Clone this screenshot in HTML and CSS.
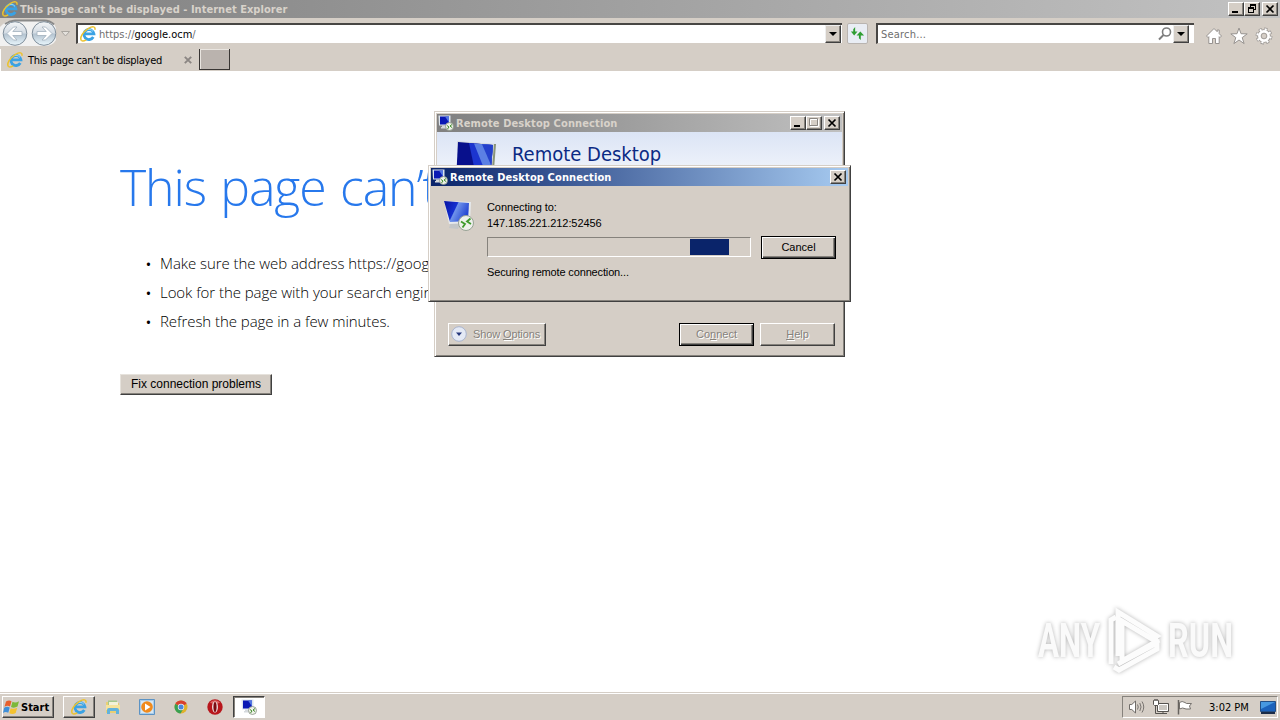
FILE: index.html
```html
<!DOCTYPE html>
<html lang="en">
<head>
<meta charset="utf-8">
<title>This page can't be displayed</title>
<link rel="stylesheet" href="styles.css">
</head>
<body>
<svg class="defs" width="0" height="0">
    <defs>
        <linearGradient id="gScreen" x1="0" y1="0" x2="1" y2="0.4">
            <stop offset="0" stop-color="#0612a0"/>
            <stop offset="0.5" stop-color="#1530d0"/>
            <stop offset="0.54" stop-color="#6f93ea"/>
            <stop offset="1" stop-color="#2648d4"/>
        </linearGradient>
        <linearGradient id="gBall" x1="0" y1="0" x2="0" y2="1">
            <stop offset="0" stop-color="#f4f6f8"/>
            <stop offset="0.48" stop-color="#d3dbe3"/>
            <stop offset="0.52" stop-color="#b4c3d0"/>
            <stop offset="1" stop-color="#e9f6fc"/>
        </linearGradient>
        <symbol id="ie" viewBox="0 0 16 16">
            <path d="M13.300 11a5 5 0 1 1 .6-3.200H5" fill="none" stroke="#3aa2e4" stroke-width="2.800"/>
            <path d="M13 5.400A5 5 0 0 0 5 5.200" fill="none" stroke="#9bdafa" stroke-width="1"/>
            <path d="M1.600 14.800C-1 12 3.200 5.500 8.500 2.300 12.500.1 15.800.2 14.800 3.800" fill="none" stroke="#ecc22e" stroke-width="1.500"/>
            <path d="M1.600 14.600c1 .9 2.800.3 4.600-.8" fill="none" stroke="#ecc22e" stroke-width="1.400"/>
        </symbol>
        <symbol id="rdc" viewBox="0 0 32 32">
            <path d="M8 23l9 2-2 5-9-1z" fill="#c3c6c8"/>
            <path d="M1 2l27 1-1 21-21 1z" fill="#e6e9ec"/>
            <path d="M1 2l25 2-1 18-18 1z" fill="url(#gScreen)"/>
            <circle cx="23" cy="24" r="7.500" fill="#eef1ec" stroke="#98a295"/>
            <path d="M18 22.500l4 2.500-2.500 3.500M27.500 19.500l-3.500 3 4 2.500" fill="none" stroke="#3f9a2c" stroke-width="1.800"/>
        </symbol>
        <symbol id="rdcSmall" viewBox="0 0 16 16">
            <path d="M.5.500h12v10H1z" fill="#dce4ee"/>
            <path d="M2 1.500h9v8H2z" fill="#0a18b4"/>
            <path d="M7 1.500h4v6z" fill="#5276e2"/>
            <path d="M4 10.500h4V12h2v1.500H3V12h1z" fill="#d5d9dd"/>
            <circle cx="11.500" cy="11.500" r="4" fill="#eef2e8" stroke="#858f81" stroke-width=".8"/>
            <path d="M9 10.500l2 1.500-1.500 2M14 9.500L12 11l2 1.500" fill="none" stroke="#3f8a2c"/>
        </symbol>
    </defs>
</svg>

<div class="browser">
    <div class="titlebar">
        <svg class="ico16"><use href="#ie"/></svg>
        <span class="caption">This page can't be displayed - Internet Explorer</span>
        <div class="winbtns">
            <span class="wbtn"><svg viewBox="0 0 14 12"><path d="M3 8h6v2H3z"/></svg></span>
            <span class="wbtn"><svg viewBox="0 0 14 12"><path d="M5 1h6v6H9V6h1V3H6v1H5zM3 4h6v6H3zM4 6v3h4V6z" fill-rule="evenodd"/></svg></span>
            <span class="wbtn last"><svg viewBox="0 0 14 12"><path d="M3.500 2.500l7 7M10.500 2.500l-7 7" stroke="#000" stroke-width="1.700"/></svg></span>
        </div>
    </div>

    <div class="toolbar">
        <svg class="nav" width="72" height="29" viewBox="0 0 72 29">
            <path d="M0 8Q6 1 15 1h28q10 0 13 8v12q-3 6-12 6H0z" fill="#f1f1f1"/>
            <path d="M5 5Q10 1.500 15 1.500h29q6 0 10 4" fill="none" stroke="#898989" stroke-width="2"/>
            <circle cx="15" cy="14.500" r="11.800" fill="url(#gBall)" stroke="#7f8e9b"/>
            <circle cx="44" cy="14.500" r="11.800" fill="url(#gBall)" stroke="#7f8e9b"/>
            <path d="M7 14.500L13.500 8H17l-4.200 4.500H22v4h-9.200L17 21h-3.500z" fill="#fff" stroke="#a2b0bc" stroke-width=".8"/>
            <path d="M52 14.500L45.500 8H42l4.200 4.500H37v4h9.200L42 21h3.500z" fill="#fff" stroke="#a2b0bc" stroke-width=".8"/>
            <path d="M61.500 12.500h8l-4 4.500z" fill="#e4e1dc" stroke="#aaa6a0"/>
        </svg>
        <div class="field address">
            <svg class="ico16"><use href="#ie"/></svg>
            <span class="url">https://<b>google.ocm</b>/</span>
            <span class="drop"><svg viewBox="0 0 14 16"><path d="M3 6h8L7 10z"/></svg></span>
        </div>
        <span class="refresh">
            <svg viewBox="0 0 18 18"><path d="M6.500 2v5H9L5.500 11 2 7h2.500V4.500zM12.500 16v-5H16L12 7 8 11h2.500v3z" fill="#2f9e32"/></svg>
        </span>
        <div class="field search">
            <span class="hint">Search...</span>
            <svg class="lens" viewBox="0 0 14 14"><circle cx="8.500" cy="5" r="4" fill="none" stroke="#7d7d7d" stroke-width="1.600"/><path d="M5.500 8L1 12.500" stroke="#7d7d7d" stroke-width="2"/></svg>
            <span class="drop"><svg viewBox="0 0 14 16"><path d="M3 6h8L7 10z"/></svg></span>
        </div>
        <div class="cmds">
            <svg viewBox="0 0 18 18"><path d="M9 1.500L1.500 9 3 10.500l.8-.8V16.500h3.700v-5h3v5h3.700V9.700l.8.8L16.500 9l-2.300-2.300V3h-2v1.700z" fill="#fff" stroke="#979390"/></svg>
            <svg viewBox="0 0 18 18"><path d="M9 1l2 5.700 6.200.2-5 3.700 1.900 6L9 13l-5.100 3.600 1.900-6-5-3.700L7 6.700z" fill="#fff" stroke="#979390"/></svg>
            <svg viewBox="0 0 18 18"><circle cx="9" cy="9" r="6.600" fill="none" stroke="#979390" stroke-width="3.600" stroke-dasharray="3 2.180"/><circle cx="9" cy="9" r="4.600" fill="none" stroke="#979390" stroke-width="4.500"/><circle cx="9" cy="9" r="6.600" fill="none" stroke="#fff" stroke-width="2.200" stroke-dasharray="2 3.180" stroke-dashoffset="-.5"/><circle cx="9" cy="9" r="4.600" fill="#d5cec6" stroke="#fff" stroke-width="2.700"/><circle cx="9" cy="9" r="2.800" fill="#d5cec6" stroke="#979390" stroke-width=".8"/></svg>
        </div>
    </div>

    <div class="tabs">
        <div class="tab">
            <svg class="ico16"><use href="#ie"/></svg>
            <span class="tabname">This page can't be displayed</span>
            <svg class="tabclose" viewBox="0 0 8 8"><path d="M.8.8l6.400 6.400M7.200.8L.8 7.200" stroke="#8b8683" stroke-width="1.900"/></svg>
        </div>
        <div class="newtab"></div>
    </div>

    <div class="page">
        <h1>This page can’t be displayed</h1>
        <ul>
            <li>Make sure the web address https://google.ocm is correct.</li>
            <li>Look for the page with your search engine.</li>
            <li>Refresh the page in a few minutes.</li>
        </ul>
        <button class="fix">Fix connection problems</button>
    </div>

    <div class="taskbar">
        <div class="start">
            <svg viewBox="0 0 18 16"><path d="M3 2.500q3-2 5.500-.3L7 7.500Q4.500 6 1.500 7.700z" fill="#e8602c"/><path d="M9.500 2.800q3 1.500 6.500-.6L14.500 7.600Q11 9.500 8 8z" fill="#7cb83a"/><path d="M1.200 8.800Q4 7 6.700 8.600L5.300 13.800Q2.500 12.300 0 14z" fill="#3f8fd8"/><path d="M7.700 9.200q3 1.500 6.500-.5L12.700 14q-3 2-6.400.3z" fill="#f4c22f"/></svg>
            <b>Start</b>
        </div>
        <div class="task up"><svg viewBox="0 0 16 16"><use href="#ie"/></svg></div>
        <div class="task"><svg viewBox="0 0 16 16"><path d="M1 3h5l1 1h7v10H1z" fill="#e9cf74"/><path d="M3 1.500h9V7H3z" fill="#a6c88c"/><path d="M4 3h9v5H4z" fill="#f4f2d8"/><path d="M1 6h14v5H1z" fill="#f6e39c"/><path d="M2 15v-4q0-2 2-2h8q2 0 2 2v4h-3v-3H5v3z" fill="#62b2dc"/></svg></div>
        <div class="task"><svg viewBox="0 0 16 16"><path d="M.5.500h15v15H.5z" fill="#a9cdea" stroke="#5c93c4"/><path d="M2 2h12v12H2z" fill="#d6e7f4"/><circle cx="8" cy="8" r="5.800" fill="#f08a1c"/><path d="M6 4.500v7L11.500 8z" fill="#fff"/></svg></div>
        <div class="task"><svg viewBox="0 0 16 16"><circle cx="8" cy="8" r="6.500" fill="#e0b22c"/><path d="M8 8L2.400 4.700A6.500 6.500 0 0 0 7.500 14.500l3-5z" fill="#38a052"/><path d="M2.400 4.700a6.500 6.500 0 0 1 11.200 0L8 8z" fill="#d8402f"/><circle cx="8" cy="8" r="3.200" fill="#f2f2f2"/><circle cx="8" cy="8" r="2.500" fill="#4a86dc"/></svg></div>
        <div class="task"><svg viewBox="0 0 16 16"><circle cx="8" cy="8" r="7.700" fill="#b8161c"/><path d="M3 3.500Q8-1 13 3.500L8 6z" fill="#dc6464"/><ellipse cx="8" cy="8" rx="2.900" ry="5.600" fill="#f3eeee"/><ellipse cx="8" cy="8" rx="1.600" ry="5" fill="#7c0b12"/></svg></div>
        <div class="task down"><svg viewBox="0 0 16 16"><use href="#rdcSmall"/></svg></div>
        <div class="tray">
            <svg viewBox="0 0 18 16"><path d="M1.500 5.500h2.300L7.500 2v12l-3.700-3.500H1.500z" fill="#fff" stroke="#706c68"/><path d="M9.500 5.500q1.500 2.500 0 5M11.800 4q2.500 4 0 8M14 2.500q3.500 5.500 0 11" fill="none" stroke="#77736f"/></svg>
            <svg viewBox="0 0 18 16"><path d="M5.500 4.500h11v8h-11z" fill="#cbc7c1" stroke="#56534f"/><path d="M6.500 5.500h9v6h-9z" fill="none" stroke="#fff"/><path d="M8 14.500h7M11 13v1.500M3.500 7v7.500H8" stroke="#56534f" fill="none"/><path d="M1.500 5.500v-4h1v-1h1v1h1v-1h1v1h1v4l-1 1h-3z" fill="#fff" stroke="#56534f"/></svg>
            <svg viewBox="0 0 18 16"><path d="M3.500 3.500q2.500-2 5.500 0l1.500 1h5l-2 2.500 1 3h-4.500q-3.500-2-6.500 0z" fill="#fff" stroke="#77736f"/><path d="M2.500 1v14.500" stroke="#66625e" stroke-width="1.500"/></svg>
            <span class="clock">3:02 PM</span>
            <svg class="desk" viewBox="0 0 16 14"><path d="M.5.500h15v10H.5z" fill="#1c62bb" stroke="#234f86"/><path d="M1 1h14L1 8z" fill="#4798e0"/><path d="M1 11h14v2H1z" fill="#1b2c48"/></svg>
        </div>
    </div>
</div>

<svg class="watermark" width="220" height="80" viewBox="0 0 220 80">
    <g class="logotext">
        <text x="4" y="51" textLength="62" lengthAdjust="spacingAndGlyphs">ANY</text>
        <text x="134" y="51" textLength="65" lengthAdjust="spacingAndGlyphs">RUN</text>
    </g>
    <g class="logomark">
        <path d="M77 58V14l5-3"/>
        <path d="M84 50V6l39 24-5 3-30-18v40l37-21"/>
        <path d="M80 61l5 3 38-21v-6L84 58"/>
    </g>
</svg>

<div class="dialog rdp">
    <div class="dtitle off">
        <svg class="ico16"><use href="#rdcSmall"/></svg>
        <span class="caption">Remote Desktop Connection</span>
        <div class="winbtns">
            <span class="wbtn"><svg viewBox="0 0 14 12"><path d="M3 8h6v2H3z"/></svg></span>
            <span class="wbtn"><svg viewBox="0 0 14 12"><path d="M3.500 2.500h8v7h-8z" fill="none" stroke="#fff"/><path d="M2.500 1.500h8v7h-8z" fill="none" stroke="#8a8681"/></svg></span>
            <span class="wbtn last"><svg viewBox="0 0 14 12"><path d="M3.500 2.500l7 7M10.500 2.500l-7 7" stroke="#000" stroke-width="1.700"/></svg></span>
        </div>
    </div>
    <div class="banner">
        <svg width="44" height="44" viewBox="0 0 44 44"><path d="M2 2l39 3-5 38H4z" fill="#d5dade"/><path d="M39 5h2l-3 38h-2z" fill="#8a9478"/><path d="M3 3l35 3-3 36H1z" fill="#08108c"/><path d="M14 4l24 2-3 36H22z" fill="#1c35cf"/><path d="M19 4.500l19 1.500-4 36z" fill="#5b80e4"/><path d="M27 5.200l11 .8-2 20z" fill="#2340cc"/></svg>
        <span>Remote Desktop</span>
    </div>
    <div class="footer">
        <span class="btn options"><svg viewBox="0 0 16 16"><circle cx="8" cy="8" r="7.300" fill="#e4e9f5" stroke="#a9b4ce"/><path d="M5 6.500h6L8 10z" fill="#25367c"/></svg>Show <u>O</u>ptions</span>
        <span class="btn default connect">Co<u>n</u>nect</span>
        <span class="btn help"><u>H</u>elp</span>
    </div>
</div>

<div class="dialog progress">
    <div class="dtitle">
        <svg class="ico16"><use href="#rdcSmall"/></svg>
        <span class="caption">Remote Desktop Connection</span>
        <div class="winbtns">
            <span class="wbtn"><svg viewBox="0 0 14 12"><path d="M3.500 2.500l7 7M10.500 2.500l-7 7" stroke="#000" stroke-width="1.700"/></svg></span>
        </div>
    </div>
    <div class="dbody">
        <svg class="bigicon" viewBox="0 0 32 32"><use href="#rdc"/></svg>
        <div class="info">
            <div class="to">Connecting to:</div>
            <div class="ip">147.185.221.212:52456</div>
            <div class="row">
                <div class="bar"><div class="chunk"></div></div>
                <span class="btn default cancel">Cancel</span>
            </div>
            <div class="status">Securing remote connection...</div>
        </div>
    </div>
</div>
</body>
</html>
```
FILE: styles.css
```css
* {
    box-sizing: border-box;
}
body {
    margin: 0;
    width: 1280px;
    height: 720px;
    overflow: hidden;
    position: relative;
    background-color: #fff;
    color: #000;
    font-family: "DejaVu Sans Condensed", "DejaVu Sans", sans-serif;
    font-size: 11px;
}
svg {
    display: block;
    flex: none;
}
.defs {
    position: absolute;
}
span, b, h1, li {
    white-space: nowrap;
}
.ico16 {
    width: 16px;
    height: 16px;
}
.browser {
    display: flex;
    flex-direction: column;
    height: 720px;
}

/* title bars */
.titlebar {
    display: flex;
    align-items: center;
    height: 18px;
    padding: 0 2px;
    background: linear-gradient(to right, #808080, #c2c2c2);
}
.caption {
    font-family: "DejaVu Sans Condensed", "DejaVu Sans", sans-serif;
    font-weight: bold;
    letter-spacing: .03px;
    color: #d8d2ca;
    margin-left: 2px;
}
.winbtns {
    display: flex;
    margin-left: auto;
}
.wbtn {
    width: 16px;
    height: 14px;
    background-color: #d5cec6;
    border: 1px solid;
    border-color: #fff #404040 #404040 #fff;
    box-shadow: inset -1px -1px #86827c;
}
.wbtn svg {
    width: 14px;
    height: 12px;
}
.last {
    margin-left: 2px;
}

/* address row */
.toolbar {
    display: flex;
    height: 31px;
    padding: 1px 0 0;
    background-color: #d5cec6;
}
.nav {
    margin: 0 4px 0 0;
}
.field {
    display: flex;
    align-items: center;
    height: 21px;
    margin-top: 4px;
    background-color: #fff;
    border-top: 2px solid #484644;
    border-left: 2px solid #484644;
    border-bottom: 1px solid #d5cec6;
}
.address {
    width: 766px;
    padding: 0 1px 0 2px;
}
.search {
    width: 318px;
    padding: 0 5px 0 3px;
}
.url, .hint {
    color: #6e6e6e;
    font-size: 11px;
}
.url {
    margin-left: 3px;
}
.hint {
    letter-spacing: .2px;
}
.url b {
    font-weight: normal;
    color: #000;
}
.drop {
    width: 16px;
    height: 18px;
    margin-left: auto;
    background-color: #d5cec6;
    border: 1px solid;
    border-color: #eee #404040 #404040 #eee;
    box-shadow: inset -1px -1px #86827c;
}
.refresh {
    width: 21px;
    height: 21px;
    margin: 4px 8px 0 5px;
    padding: 1px;
    background-color: #e9edf4;
    border: 1px solid #b9b4b0;
    border-radius: 2px;
}
.lens {
    width: 14px;
    height: 14px;
    margin-left: auto;
}
.search .drop {
    margin-left: 1px;
}
.cmds {
    display: flex;
    gap: 7px;
    margin: 8px 0 0 11px;
}
.cmds svg {
    width: 18px;
    height: 18px;
}

/* tabs */
.tabs {
    display: flex;
    height: 22px;
    background-color: #d5cec6;
}
.tab {
    display: flex;
    align-items: center;
    width: 199px;
    height: 22px;
    padding: 0 7px 0 6px;
    border-left: 1px solid #fff;
}
.tabname {
    margin-left: 5px;
    letter-spacing: -.28px;
}
.tabclose {
    width: 8px;
    height: 8px;
    margin-left: auto;
}
.newtab {
    width: 31px;
    height: 21px;
    background-color: #bab3ae;
    border: 1px solid #383533;
    border-width: 0 1px 1px 1px;
    box-shadow: inset 1px 1px #e9e5e0;
}

/* error page */
.page {
    flex: 1;
    padding: 0 120px;
    font-family: "Open Sans", sans-serif;
    font-weight: 300;
    overflow: hidden;
}
.page h1 {
    margin: 80px 0 0;
    font-size: 50px;
    line-height: 72px;
    font-weight: 300;
    letter-spacing: -1.1px;
    word-spacing: 2.5px;
    color: #2778ec;
}
.page ul {
    list-style: none;
    margin: 26px 0 0;
    padding: 0 0 0 40px;
}
.page li {
    height: 29px;
    line-height: 29px;
    font-size: 15px;
    letter-spacing: -.06px;
}
.page li::before {
    content: "•";
    display: inline-block;
    width: 14px;
    margin-left: -14px;
    font-size: 13px;
    font-weight: 600;
}
.fix {
    display: block;
    width: 152px;
    height: 21px;
    margin-top: 38px;
    padding: 0 0 2px;
    font-family: "Liberation Sans", sans-serif;
    font-size: 12px;
    color: #000;
    background-color: #d5cec6;
    border: 1px solid;
    border-color: #e6e2dc #404040 #404040 #e6e2dc;
    box-shadow: inset -1px -1px #86827c;
}

/* taskbar */
.taskbar {
    display: flex;
    align-items: center;
    height: 28px;
    padding: 1px 2px 0;
    background-color: #d5cec6;
    border-top: 1px solid #d5cec6;
    box-shadow: inset 0 1px #fff;
}
.start, .up {
    border: 1px solid;
    border-color: #fff #404040 #404040 #fff;
    box-shadow: inset -1px -1px #86827c;
}
.start {
    display: flex;
    align-items: center;
    width: 52px;
    height: 22px;
    margin-right: 9px;
}
.start svg {
    width: 18px;
    height: 16px;
}
.task {
    display: flex;
    align-items: center;
    justify-content: center;
    width: 32px;
    height: 22px;
    margin-right: 2px;
}
.task svg {
    width: 16px;
    height: 16px;
}
.down {
    background-color: #fff;
    border: 1px solid;
    border-color: #404040 #fff #fff #404040;
    box-shadow: inset 1px 1px #86827c;
}
.tray {
    display: flex;
    align-items: center;
    width: 156px;
    height: 22px;
    margin-left: auto;
    padding-left: 5px;
    border: 1px solid;
    border-color: #86827c #fff #fff #86827c;
}
.tray svg {
    width: 18px;
    height: 16px;
    margin-right: 6px;
}
.clock {
    margin-left: 9px;
}
.tray .desk {
    width: 16px;
    height: 14px;
    margin: 2px 1px 0 auto;
}

/* corner logo */
.watermark {
    position: absolute;
    left: 1034px;
    top: 606px;
    filter: drop-shadow(0 0 2px #b4b4b4);
}
.logotext {
    fill: #fafafa;
    font-family: Roboto, "Liberation Sans", sans-serif;
    font-size: 48px;
    font-weight: 700;
}
.logomark {
    fill: none;
    stroke: #fcfcfc;
    stroke-width: 5px;
}

/* dialogs */
.dialog {
    position: absolute;
    padding: 2px;
    background-color: #d5cec6;
    border: 1px solid;
    border-color: #d5cec6 #404040 #404040 #d5cec6;
    box-shadow: inset 1px 1px #fff, inset -1px -1px #86827c;
}
.rdp {
    left: 434px;
    top: 111px;
    width: 411px;
    height: 246px;
}
.progress {
    left: 428px;
    top: 165px;
    width: 423px;
    height: 137px;
}
.dtitle {
    display: flex;
    align-items: center;
    height: 18px;
    padding: 0 2px 0 1px;
    background: linear-gradient(to right, #0a246a, #a6caf0);
}
.dtitle .caption {
    color: #fff;
    letter-spacing: .12px;
}
.off {
    background: linear-gradient(to right, #808080, #c0c0c0);
}
.dtitle.off .caption {
    color: #d8d2ca;
}
.banner {
    display: flex;
    height: 62px;
    padding: 7px 0 0 18px;
    background: linear-gradient(to bottom, #dbe4f5, #f4f7fc 50px);
    overflow: hidden;
}
.banner span {
    margin: 3px 0 0 13px;
    font-size: 20px;
    line-height: 25px;
    color: #0b2a84;
}
.footer {
    display: flex;
    padding: 129px 7px 0 11px;
}
.btn {
    display: flex;
    align-items: center;
    justify-content: center;
    height: 23px;
    padding-bottom: 1px;
    font-family: "Liberation Sans", sans-serif;
    font-size: 11px;
    border: 1px solid;
    border-color: #fff #404040 #404040 #fff;
    box-shadow: inset -1px -1px #86827c;
}
.default {
    border-color: #000;
    box-shadow: inset 1px 1px #fff, inset -1px -1px #404040, inset -2px -2px #86827c;
}
.footer .btn {
    color: #86827c;
    text-shadow: 1px 1px #fff;
    white-space: pre;
}
.options {
    width: 98px;
    padding-right: 3px;
    letter-spacing: -.12px;
}
.options svg {
    width: 16px;
    height: 16px;
    margin-right: 6px;
}
.connect {
    width: 75px;
    margin-left: auto;
}
.help {
    width: 75px;
    margin-left: 6px;
}
.dbody {
    display: flex;
    padding: 13px 12px 0 12px;
    font-family: "Liberation Sans", sans-serif;
}
.bigicon {
    width: 32px;
    height: 32px;
    margin-right: 12px;
}
.info {
    line-height: 16px;
}
.to, .ip {
    letter-spacing: -.08px;
}
.status {
    letter-spacing: -.15px;
}
.row {
    display: flex;
    gap: 10px;
    margin-top: 4px;
}
.bar {
    width: 264px;
    height: 20px;
    margin-top: 2px;
    padding: 1px;
    border: 1px solid;
    border-color: #86827c #fff #fff #86827c;
}
.chunk {
    width: 39px;
    height: 16px;
    margin-left: 201px;
    background-color: #0a246a;
}
.cancel {
    width: 75px;
    margin-top: 1px;
}
.status {
    margin-top: 5px;
}
```
